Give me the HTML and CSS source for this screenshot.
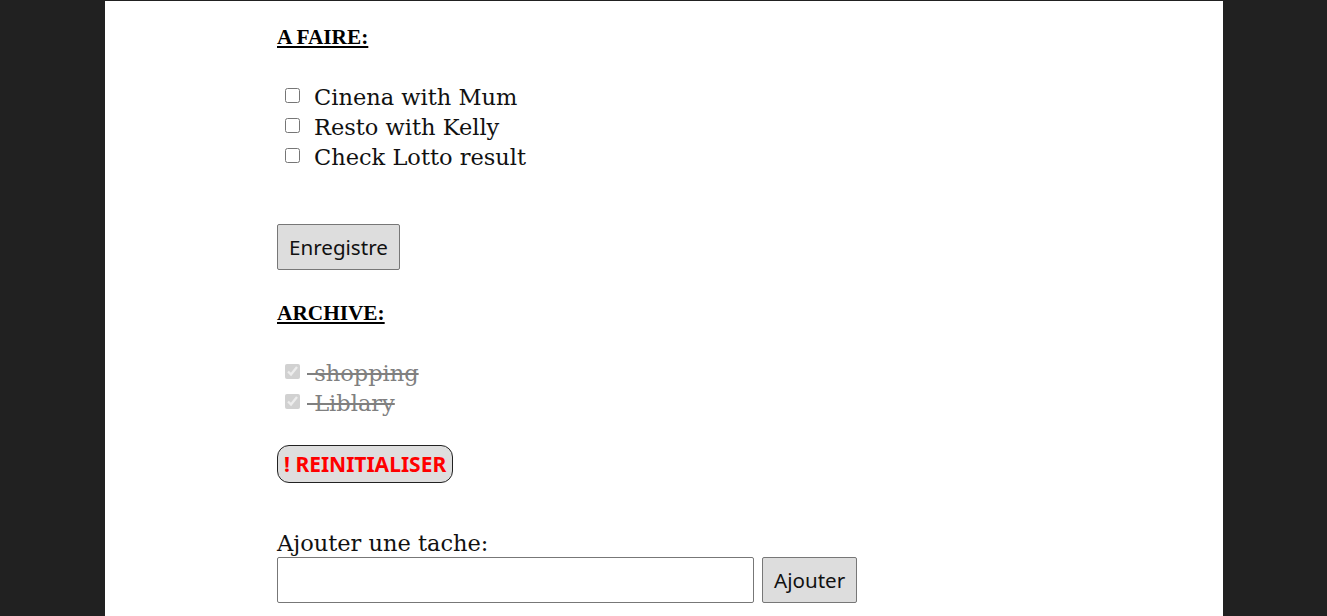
FILE: index.html
```html
<!DOCTYPE html>
<html>
<head>
<meta charset="utf-8">
<link rel="stylesheet" href="styles.css">
</head>
<body>
<div class="page">
  <div class="content">
    <h2 class="title">A FAIRE:</h2>
    <ul class="tasks">
      <li><input type="checkbox"><span>Cinena with Mum</span></li>
      <li><input type="checkbox"><span>Resto with Kelly</span></li>
      <li><input type="checkbox"><span>Check Lotto result</span></li>
    </ul>
    <button class="btn save">Enregistre</button>
    <h2 class="title archive-title">ARCHIVE:</h2>
    <ul class="tasks archive">
      <li><input type="checkbox" checked disabled><span>&nbsp;shopping</span></li>
      <li><input type="checkbox" checked disabled><span>&nbsp;Liblary</span></li>
    </ul>
    <button class="reset">! REINITIALISER</button>
    <div class="add">
      <label class="add-label">Ajouter une tache:</label>
      <div class="add-row">
        <input type="text" class="add-input">
        <button class="btn add-btn">Ajouter</button>
      </div>
    </div>
  </div>
</div>
</body>
</html>
```
FILE: styles.css
```css
html, body {
  margin: 0;
  padding: 0;
  background: #212121;
  height: 100%;
}
.page {
  margin: 1px 0 0 105px;
  width: 1118px;
  background: #fff;
  min-height: 700px;
}
.content {
  padding: 26px 0 0 172px;
}
.title {
  font-family: "Liberation Serif", serif;
  font-weight: bold;
  font-size: 21.3px;
  text-decoration: underline;
  margin: 0;
  line-height: 20px;
}
.tasks {
  list-style: none;
  margin: 35px 0 0 0;
  padding: 0;
}
.tasks li {
  font-family: "DejaVu Serif", serif;
  font-size: 22.5px;
  line-height: 30px;
  height: 30px;
  display: flex;
  align-items: center;
  color: #111;
}
.tasks input {
  width: 15px;
  height: 15px;
  margin: -3px 14px 0 8px;
}
.archive input {
  margin-right: 7px;
}
.archive li span {
  text-decoration: line-through;
  color: #808080;
}
.btn {
  font-family: "Noto Sans", sans-serif;
  font-size: 20.6px;
  background: #dddddd;
  border: 1px solid #777;
  border-radius: 2px;
  color: #111;
  height: 46px;
  padding: 0 11px;
}
.save {
  margin-top: 52px;
  display: block;
}
.archive-title {
  margin-top: 33px;
}
.archive {
  margin-top: 35px;
}
.reset {
  display: block;
  margin-top: 27px;
  font-family: "Noto Sans", sans-serif;
  font-weight: bold;
  font-size: 21px;
  color: #ff0000;
  background: #dedede;
  border: 1px solid #222;
  border-radius: 12px;
  height: 38px;
  line-height: 36px;
  padding: 0 6px;
}
.add {
  margin-top: 47px;
}
.add-label {
  font-family: "DejaVu Serif", serif;
  font-size: 22.5px;
  display: block;
  line-height: 26px;
  color: #111;
}
.add-row {
  display: flex;
  gap: 8px;
  margin-top: 1px;
}
.add-input {
  width: 477px;
  height: 46px;
  box-sizing: border-box;
  border: 1px solid #777;
  border-radius: 2px;
  margin: 0;
}
```
